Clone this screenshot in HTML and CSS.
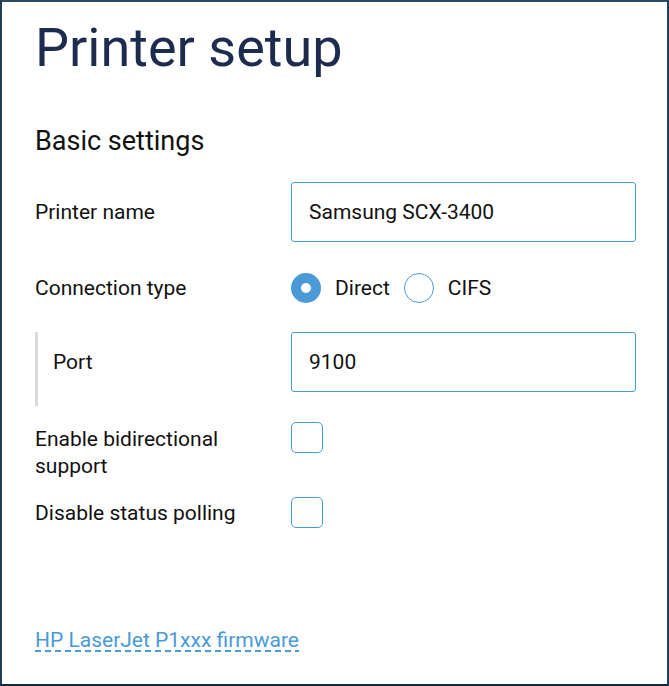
FILE: index.html
```html
<!DOCTYPE html>
<html>
<head>
<meta charset="utf-8">
<link rel="stylesheet" href="styles.css">
</head>
<body>
<div class="frame">
  <h1 class="title">Printer setup</h1>
  <h2 class="section">Basic settings</h2>
  <div class="row row-name">
    <label class="label">Printer name</label>
    <div class="input">Samsung SCX-3400</div>
  </div>
  <div class="row row-conn">
    <span class="label">Connection type</span>
    <div class="radios">
      <span class="radio checked"></span><span class="radio-label">Direct</span>
      <span class="radio"></span><span class="radio-label">CIFS</span>
    </div>
  </div>
  <div class="row row-port">
    <label class="label">Port</label>
    <div class="input">9100</div>
  </div>
  <div class="row row-bidi">
    <span class="label label-multi">Enable bidirectional<br>support</span>
    <span class="checkbox"></span>
  </div>
  <div class="row row-poll">
    <span class="label label-poll">Disable status polling</span>
    <span class="checkbox"></span>
  </div>
  <a class="link" href="#">HP LaserJet P1xxx firmware</a>
</div>
</body>
</html>
```
FILE: styles.css
```css
html, body {
  margin: 0;
  padding: 0;
  background: #ffffff;
}
.frame {
  box-sizing: border-box;
  width: 669px;
  height: 686px;
  border: 2px solid #1f3f58;
  border-top-color: #2a4a63;
  border-bottom-color: #0e2b40;
  padding: 14px 0 0 33px;
  font-family: Roboto, "Liberation Sans", sans-serif;
  color: #111111;
}
.title {
  margin: 0;
  font-size: 54px;
  line-height: 64px;
  font-weight: 400;
  color: #1d2b4f;
}
.section {
  margin: 46px 0 0 0;
  font-size: 27px;
  line-height: 30px;
  font-weight: 400;
  color: #111111;
}
.row {
  display: grid;
  grid-template-columns: 256px 345px;
  align-items: center;
}
.label {
  font-size: 21px;
  line-height: 27px;
}
.row-name {
  margin-top: 26px;
}
.input {
  box-sizing: border-box;
  height: 60px;
  border: 1px solid #4a9ad8;
  border-radius: 3px;
  padding: 0 17px;
  display: flex;
  align-items: center;
  font-size: 21px;
}
.row-conn {
  margin-top: 31px;
  height: 30px;
}
.radios {
  display: flex;
  align-items: center;
}
.radio {
  box-sizing: border-box;
  width: 30px;
  height: 30px;
  border-radius: 50%;
  border: 1px solid #4a9ad8;
  background: #ffffff;
}
.radio.checked {
  border: 10px solid #4a9ad8;
}
.radio-label {
  font-size: 21px;
  margin: 0 14px 0 14px;
}
.row-port {
  margin-top: 29px;
  border-left: 3px solid #d9d9de;
  padding: 0 0 14px 15px;
  grid-template-columns: 238px 345px;
}
.row-bidi {
  margin-top: 16px;
  align-items: start;
}
.label-multi {
  padding-top: 4px;
}
.label-poll {
  padding-top: 2px;
}
.checkbox {
  box-sizing: border-box;
  width: 32px;
  height: 31px;
  border: 1px solid #4a9ad8;
  border-radius: 5px;
}
.row-poll {
  margin-top: 17px;
}
.link {
  display: inline-block;
  margin-top: 100px;
  font-size: 21px;
  line-height: 24px;
  color: #4a9ad8;
  text-decoration: none;
  background-image: linear-gradient(to right, #4a9ad8 6px, transparent 6px);
  background-size: 10px 2px;
  background-repeat: repeat-x;
  background-position: 0 100%;
}
```
